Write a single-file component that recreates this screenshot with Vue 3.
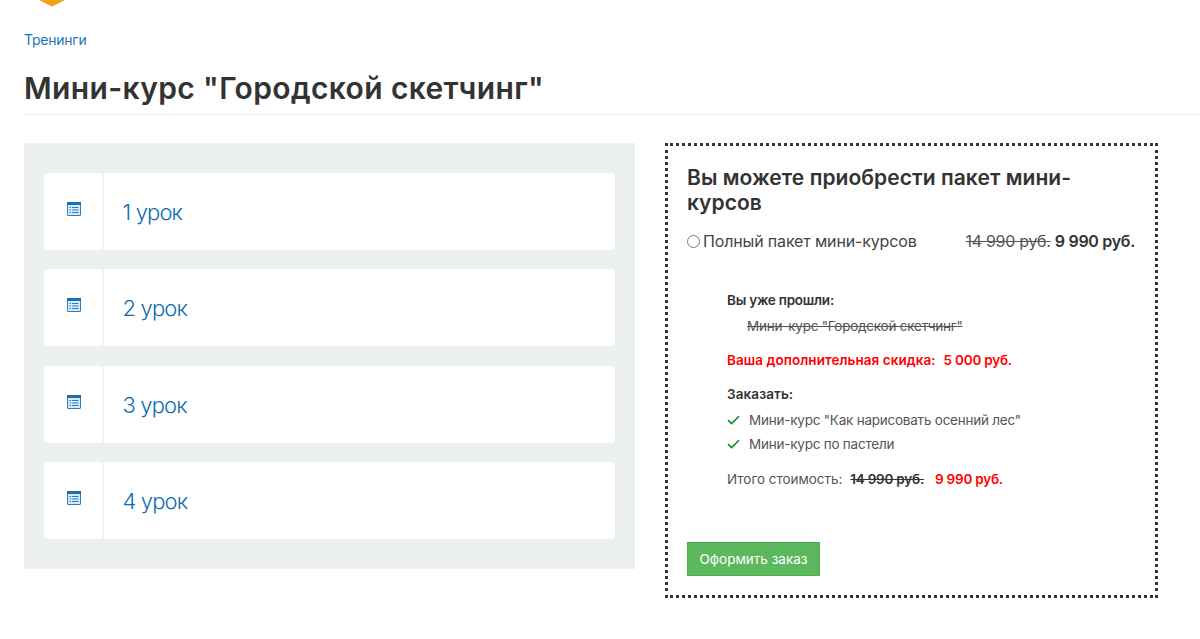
<template>
  <div class="page">
    <div class="logo-clip">
      <svg width="28" height="7" viewBox="0 0 28 7"><path d="M1 0 H27 L14 6.5 Z" fill="#f0a118" /></svg>
    </div>
    <a class="crumb">Тренинги</a>
    <h1 class="title">Мини-курс "Городской скетчинг"</h1>
    <div class="columns">
      <div class="lessons">
        <div v-for="n in lessons" :key="n" class="lesson">
          <div class="lesson-icon">
            <svg width="14" height="14" viewBox="0 0 14 14">
              <rect x="0.5" y="0.5" width="13" height="13" rx="0.5" fill="#d9e9f6" stroke="#2a7fc1" />
              <rect x="0" y="0" width="14" height="3" fill="#1b6fb3" />
              <path d="M2.5 5.5h1.5M5 5.5h6.5M2.5 8h1.5M5 8h6.5M2.5 10.5h1.5M5 10.5h6.5" stroke="#2a7fc1" stroke-width="1" />
            </svg>
          </div>
          <div class="lesson-name">{{ n }} урок</div>
        </div>
      </div>
      <div class="offer">
        <h2 class="offer-title">Вы можете приобрести пакет мини-курсов</h2>
        <div class="package">
          <label class="package-label"><span class="radio"></span>Полный пакет мини-курсов</label>
          <div class="package-price"><s>14 990 руб.</s> <b>9 990 руб.</b></div>
        </div>
        <div class="details">
          <div class="strong done-head">Вы уже прошли:</div>
          <div class="done"><s>Мини-курс "Городской скетчинг"</s></div>
          <div class="strong red discount"><span class="discount-label">Ваша дополнительная скидка:</span><span>5 000 руб.</span></div>
          <div class="strong order-head">Заказать:</div>
          <div v-for="c in courses" :key="c" class="course">
            <svg width="13" height="10" viewBox="0 0 13 10"><path d="M1 5.2 L4.6 8.6 L12 1.2" fill="none" stroke="#0f8a2e" stroke-width="1.6" /></svg>
            <span>{{ c }}</span>
          </div>
          <div class="total">
            <span class="total-label">Итого стоимость:</span>
            <s class="old">14 990 руб.</s>
            <span class="strong red">9 990 руб.</span>
          </div>
        </div>
        <button class="order">Оформить заказ</button>
      </div>
    </div>
  </div>
</template>

<script setup>
const lessons = [1, 2, 3, 4]
const courses = ['Мини-курс "Как нарисовать осенний лес"', 'Мини-курс по пастели']
</script>

<style>
html, body { margin: 0; background: #fff; overflow: hidden; }
</style>

<style scoped>
.page { height: 639px; padding-left: 24px; font-family: Inter, "Noto Sans", sans-serif; color: #333; box-sizing: border-box; position: relative; }
.logo-clip { position: absolute; left: 38px; top: 0; line-height: 0; }
.crumb { display: block; padding-top: 32px; font-size: 14px; line-height: 16px; color: #1b75bb; letter-spacing: -0.25px; }
.title { margin: 22px 0 0; height: 44px; font-size: 30px; line-height: 36px; font-weight: 600; color: #333; border-bottom: 1px solid #eceff1; letter-spacing: 0.37px; }
.columns { display: flex; margin-top: 28px; align-items: flex-start; gap: 30px; }
.lessons { width: 611px; height: 426px; box-sizing: border-box; background: #ecf0f1; padding: 30px 20px; display: flex; flex-direction: column; gap: 19.75px; }
.lesson { height: 77px; background: #fff; border-radius: 4px; display: flex; }
.lesson-icon { width: 56px; border-right: 2px solid #f1f4f6; display: flex; justify-content: center; align-items: flex-start; padding: 29px 0 0 2px; }
.lesson-name { padding: 26px 0 0 18.5px; font-size: 22px; line-height: 26px; font-weight: 350; color: #0f6cad; letter-spacing: -0.85px; }
.offer { width: 493px; height: 455px; box-sizing: border-box; border: 3px dotted #333; padding: 19px 20px 21px 19px; }
.offer-title { margin: 0; font-size: 21px; line-height: 25px; font-weight: 600; color: #333; letter-spacing: 0.06px; }
.package { display: flex; justify-content: space-between; margin-top: 14px; font-size: 16px; line-height: 24px; letter-spacing: -0.15px; }
.package-label { display: flex; align-items: center; color: #444; }
.radio { width: 11px; height: 11px; border: 1px solid #767676; border-radius: 50%; margin-right: 3px; }
.package-price { color: #555; letter-spacing: -0.3px; }
.package-price b { color: #333; font-weight: 600; }
.details { padding: 37px 0 0 40px; font-size: 13.5px; line-height: 20px; letter-spacing: -0.23px; }
.strong { font-weight: 600; color: #333; }
.red { color: #f00; }
.done { padding: 6px 0 0 20px; color: #555; }
.discount { margin-top: 14px; display: flex; gap: 8px; }
.discount-label { letter-spacing: 0.06px; }
.order-head { margin-top: 14px; margin-bottom: 6px; letter-spacing: 0.1px; }
.course { display: flex; align-items: center; gap: 9px; margin-top: 4px; color: #555; }
.total { display: flex; gap: 8px; margin-top: 15px; color: #555; }
.total-label { letter-spacing: -0.05px; }
.old { color: #333; font-weight: 600; }
.total .red { margin-left: 3px; color: #f00; }
.order { display: block; margin-top: 53px; width: 133px; height: 34px; background: #5cb85c; border: 1px solid #4cae4c; color: #fff; font: inherit; font-size: 13.5px; letter-spacing: 0; padding: 0; }
</style>
